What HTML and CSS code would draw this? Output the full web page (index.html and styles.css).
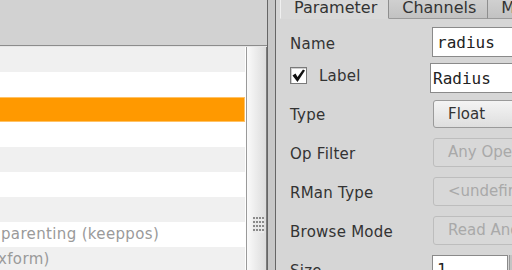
FILE: index.html
```html
<!DOCTYPE html>
<html>
<head>
  <title>Edit Parameter Interface</title>
  <link rel="stylesheet" href="styles.css">
</head>
<body>
  <div class="window">
    <div class="left-pane">
      <div class="left-header"></div>
      <div class="tree-area">
        <div class="tree">
          <div class="tree-row"></div>
          <div class="tree-row"></div>
          <div class="tree-row selected"></div>
          <div class="tree-row"></div>
          <div class="tree-row"></div>
          <div class="tree-row"></div>
          <div class="tree-row"></div>
          <div class="tree-row"><span class="item-label">parenting (keeppos)</span></div>
          <div class="tree-row"><span class="item-label cut">xform)</span></div>
        </div>
        <div class="scrollbar">
          <div class="grip"></div>
        </div>
      </div>
    </div>

    <div class="splitter"></div>

    <div class="right-pane">
      <div class="tabs">
        <div class="tab active">Parameter</div>
        <div class="tab">Channels</div>
        <div class="tab">Menu</div>
      </div>

      <div class="tab-body">
        <div class="row text-row">
          <div class="row-label">Name</div>
          <input class="text-field" type="text" value="radius">
        </div>
        <div class="row text-row">
          <div class="row-label check-label">
            <span class="check">
              <svg width="15" height="15" viewBox="0 0 15 15">
                <polygon points="1.5,7.5 4.5,5.5 6.5,9 12,1.5 14,2.5 6.5,14" fill="#111"/>
              </svg>
            </span>
            Label
          </div>
          <input class="text-field wide" type="text" value="Radius">
        </div>
        <div class="row">
          <div class="row-label">Type</div>
          <div class="menu-button">Float</div>
        </div>
        <div class="row">
          <div class="row-label">Op Filter</div>
          <div class="menu-button disabled">Any Operator</div>
        </div>
        <div class="row">
          <div class="row-label">RMan Type</div>
          <div class="menu-button disabled">&lt;undefined&gt;</div>
        </div>
        <div class="row">
          <div class="row-label">Browse Mode</div>
          <div class="menu-button disabled">Read And Write</div>
        </div>
        <div class="row">
          <div class="row-label">Size</div>
          <input class="text-field size" type="text" value="1">
          <div class="size-slider"></div>
        </div>
      </div>
    </div>
  </div>
</body>
</html>
```

FILE: styles.css
```css
body {
  margin: 0;
  font-family: "DejaVu Sans", sans-serif;
  font-size: 15px;
  color: #333;
  background-color: #d6d6d6;
  overflow: hidden;
}

.window {
  display: flex;
  width: 512px;
  height: 270px;
  overflow: hidden;
}

/* left side: parameter tree */
.left-pane {
  width: 267px;
  flex-shrink: 0;
  display: flex;
  flex-direction: column;
  background-color: #d2d2d2;
}

.left-header {
  height: 45px;
  flex-shrink: 0;
  border-bottom: 1px solid #8c8c8c;
}

.tree-area {
  flex: 1;
  display: flex;
  border-top: 1px solid #e6e6e6;
}

.tree {
  width: 246px;
  background-color: #fff;
  overflow: hidden;
}

.tree-row {
  width: 245px;
  height: 25px;
  line-height: 25px;
  box-sizing: border-box;
  white-space: nowrap;
  letter-spacing: 0.35px;
  color: #9a9a9a;
}

.tree-row:nth-child(odd) {
  background-color: #f0f0f0;
}

.tree-row.selected {
  background-color: #ff9900;
  border: 1px solid #ffc266;
  border-left: none;
}

.item-label {
  padding-left: 1px;
}

.item-label.cut {
  margin-left: -2px;
  padding-left: 0;
}

.scrollbar {
  width: 19px;
  border-left: 1px solid #9a9a9a;
  border-right: 1px solid #7c7c7c;
  background: linear-gradient(90deg, #fafafa, #dcdcdc);
}

.grip {
  width: 11px;
  height: 16px;
  margin: 170px 0 0 6px;
  background:
    linear-gradient(90deg, transparent 2px, #eaeaea 2px) 0 0 / 3px 4px,
    linear-gradient(transparent 2px, #eaeaea 2px) 0 0 / 3px 4px,
    #8a8a8a;
}

.splitter {
  width: 7px;
  flex-shrink: 0;
  background-color: #c8c8c8;
  border-left: 1px solid #666;
  border-right: 1px solid #666;
}

/* right side: parameter editor */
.right-pane {
  flex: 1;
  overflow: hidden;
}

.tabs {
  display: flex;
  padding-left: 4px;
}

.tab {
  height: 18px;
  line-height: 16px;
  padding: 0 11px 0 13px;
  font-size: 16px;
  white-space: nowrap;
  background: linear-gradient(#d0d0d0, #c2c2c2);
  border-right: 1px solid #8e8e8e;
  border-bottom: 1px solid #9a9a9a;
}

.tab.active {
  background-color: #d9d9d9;
  background-image: none;
  border-left: 1px solid #f0f0f0;
  border-bottom-color: #d9d9d9;
}

.tab-body {
  padding: 8px 0 0 14px;
}

.row {
  display: flex;
  align-items: center;
  height: 29px;
  margin-bottom: 10px;
}

.row.text-row {
  height: 30px;
  margin-bottom: 6px;
}

.row-label {
  width: 142px;
  flex-shrink: 0;
  padding-top: 3px;
  display: flex;
  align-items: center;
  white-space: nowrap;
  letter-spacing: 0.25px;
}

.row-label.check-label {
  padding-top: 0;
  margin-top: -5px;
}

.check {
  width: 15px;
  height: 15px;
  margin-right: 12px;
  border: 1px solid #7a7a7a;
  background-color: #fff;
  box-shadow: inset 1px 1px 0 #cfcfcf;
}

.check svg {
  display: block;
}

.text-field {
  width: 120px;
  height: 30px;
  margin: 0;
  padding: 0 4px;
  box-sizing: border-box;
  border: 1px solid #8a8a8a;
  background-color: #fff;
  font-family: "DejaVu Sans Mono", monospace;
  font-size: 16px;
  color: #222;
  outline: none;
}

.text-field.wide {
  margin-left: -2px;
  padding-left: 2px;
}

.text-field.size {
  width: 76px;
  flex-shrink: 0;
}

.size-slider {
  width: 20px;
  height: 30px;
  margin-left: 1px;
  flex-shrink: 0;
  background-color: #c4c4c4;
  border-left: 1px solid #999;
}

.menu-button {
  width: 130px;
  height: 28px;
  margin-left: 1px;
  padding-left: 14px;
  box-sizing: border-box;
  flex-shrink: 0;
  line-height: 26px;
  white-space: nowrap;
  overflow: hidden;
  border: 1px solid #9a9a9a;
  border-radius: 3px;
  background: linear-gradient(#f4f4f4, #dedede);
}

.menu-button.disabled {
  height: 29px;
  line-height: 27px;
  color: #a9a9a9;
  background: #d8d8d8;
  border-color: #bdbdbd;
}
```
